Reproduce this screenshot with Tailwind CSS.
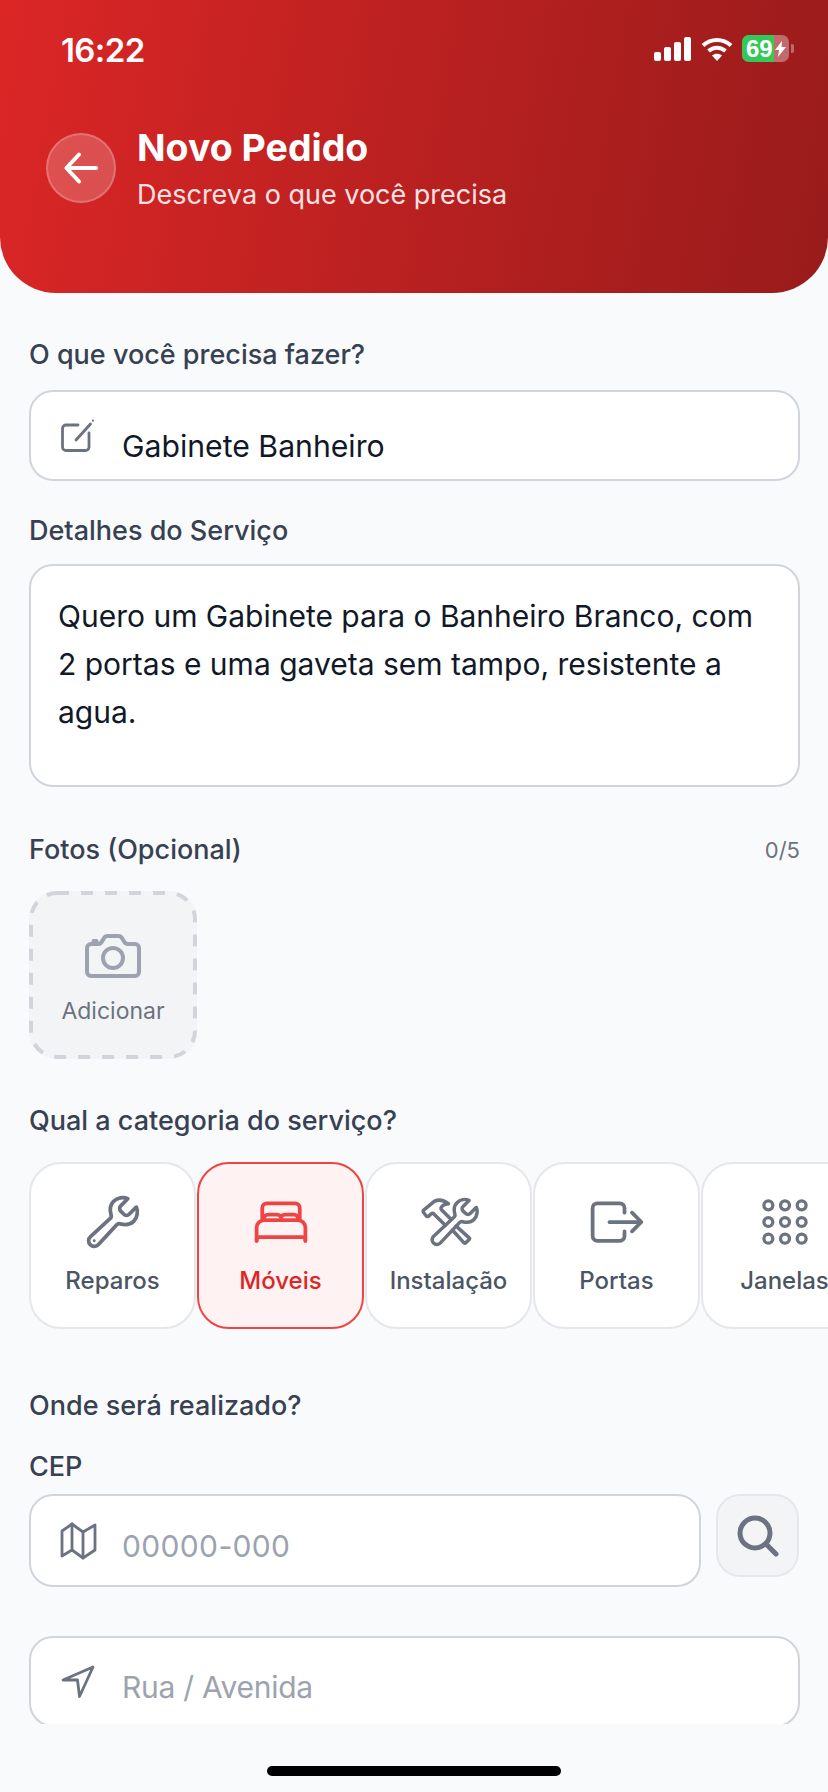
<!DOCTYPE html>
<html lang="pt-BR">
<head>
<meta charset="utf-8">
<script src="https://cdn.jsdelivr.net/npm/@tailwindcss/browser@4"></script>
</head>
<body class="m-0">
<div class="w-[828px] h-[1792px] overflow-hidden bg-[#f9fafb] flex flex-col font-['Inter',sans-serif]">
  <header class="h-[293px] shrink-0 rounded-b-[56px] bg-linear-100 from-[#dc2626] to-[#991b1b] text-white flex flex-col">
    <div class="h-[133px] shrink-0 flex items-start justify-between pl-[61px] pr-[34px] pt-[30px]">
      <span class="text-[33px] leading-[40px] font-semibold tracking-[-0.6px]">16:22</span>
      <div class="flex items-center gap-[9px] mt-[5px]">
        <svg width="38" height="24" viewBox="0 0 38 24" fill="#fff"><rect x="0" y="15" width="7" height="9" rx="2"/><rect x="10" y="10" width="7" height="14" rx="2"/><rect x="20" y="5" width="7" height="19" rx="2"/><rect x="30" y="0" width="7" height="24" rx="2"/></svg>
        <svg width="32" height="25" viewBox="0 0 32 25" fill="none" stroke="#fff" stroke-width="4"><path d="M2 9.500C10 2 22 2 30 9.500"/><path d="M7.500 15C12.500 10.500 19.500 10.500 24.500 15"/><path d="M16 25l-5-5.500c3-2.500 7-2.500 10 0z" fill="#fff" stroke="none"/></svg>
        <div class="flex items-center gap-[2px]">
          <div class="relative w-[47px] h-[27px] rounded-[7px] overflow-hidden bg-white/35 flex">
            <div class="w-[32px] h-full bg-[#34c759]"></div>
            <div class="absolute inset-0 flex items-center pl-[4px] gap-[2px]">
              <span class="font-['Liberation_Sans',sans-serif] text-[24px] leading-[27px] font-bold">69</span>
              <svg width="11" height="16" viewBox="0 0 11 16" fill="#fff"><path d="M7 0L0 9h4L3 16l8-10H6.500z"/></svg>
            </div>
          </div>
          <div class="w-[3px] h-[9px] rounded-r-[2px] bg-white/35"></div>
        </div>
      </div>
    </div>
    <div class="flex items-start pl-[46px] gap-[21px]">
      <div class="w-[70px] h-[70px] shrink-0 rounded-full bg-white/20 border-2 border-white/20 flex items-center justify-center">
        <svg width="34" height="32" viewBox="0 0 34 32" fill="none" stroke="#fff" stroke-width="4" stroke-linecap="round" stroke-linejoin="round"><path d="M15 2.500L2.500 16l12.500 13.500"/><path d="M3 16h29"/></svg>
      </div>
      <div class="flex flex-col -mt-[7px]">
        <h1 class="text-[37.5px] leading-[44px] font-bold">Novo Pedido</h1>
        <p class="text-[27px] leading-[36px] text-[#fee2e2] mt-[7px]">Descreva o que você precisa</p>
      </div>
    </div>
  </header>

  <main class="h-[1431px] shrink-0 overflow-hidden pl-[29px] pr-[28px] pt-[44px] flex flex-col">
    <label class="h-[36px] shrink-0 leading-[36px] text-[27px] font-medium text-[#374151]">O que você precisa fazer?</label>
    <div class="mt-[17px] h-[91px] shrink-0 rounded-[24px] border-2 border-[#d1d5db] bg-white flex items-center pl-[29px]">
      <svg width="36" height="36" viewBox="10 7 36 36" fill="none" stroke="#6b7280" stroke-width="2.800" stroke-linecap="round" stroke-linejoin="round"><path d="M28 14H16a3.500 3.500 0 0 0-3.500 3.500V36a3.500 3.500 0 0 0 3.500 3.500H35.500a3.500 3.500 0 0 0 3.500-3.500V22"/><path d="M26 29L40.500 13"/><path d="M43 9.500v.1" stroke-width="2.200"/></svg>
      <span class="ml-[26px] pt-[20px] text-[30.200px] leading-[40px] text-[#111827]">Gabinete Banheiro</span>
    </div>

    <label class="mt-[32px] h-[36px] shrink-0 leading-[36px] text-[27px] font-medium text-[#374151]">Detalhes do Serviço</label>
    <div class="mt-[15px] h-[223px] shrink-0 rounded-[24px] border-2 border-[#d1d5db] bg-white pl-[27px] pr-[29px] pt-[26px] text-[30px] leading-[48px] text-[#111827]">Quero um Gabinete para o Banheiro Branco, com 2 portas e uma gaveta sem tampo, resistente a agua.</div>

    <div class="mt-[45px] h-[36px] shrink-0 flex items-center justify-between">
      <label class="text-[27px] leading-[36px] font-medium text-[#374151]">Fotos (Opcional)</label>
      <span class="text-[22px] text-[#6b7280]">0/5</span>
    </div>
    <div class="relative mt-[23px] w-[168px] h-[168px] shrink-0 rounded-[28px] bg-[#f3f4f6] flex flex-col items-center pt-[33px]">
      <svg class="absolute inset-0" width="168" height="168" viewBox="0 0 168 168" fill="none" stroke="#d1d5db" stroke-width="4" stroke-dasharray="12 12"><rect x="2" y="2" width="164" height="164" rx="26"/></svg>
      <svg width="64" height="64" viewBox="0 0 512 512" fill="none" stroke="#9ca3af" stroke-width="32" stroke-linecap="round" stroke-linejoin="round"><path d="M350.540 148.680l-26.620-42.060C318.310 100.080 310.620 96 302 96h-92c-8.620 0-16.310 4.080-21.920 10.620l-26.620 42.060C155.850 155.230 148.620 160 140 160H80a32 32 0 00-32 32v192a32 32 0 0032 32h352a32 32 0 0032-32V192a32 32 0 00-32-32h-59c-8.650 0-16.850-4.770-22.460-11.320z"/><circle cx="256" cy="272" r="80"/><path d="M124 158v-22h-24v22"/></svg>
      <span class="mt-[7px] text-[23px] leading-[32px] text-[#6b7280]">Adicionar</span>
    </div>

    <label class="mt-[44px] h-[36px] shrink-0 leading-[36px] text-[27px] font-medium text-[#374151]">Qual a categoria do serviço?</label>
    <div class="mt-[23px] -mr-[28px] flex gap-[1px] overflow-hidden shrink-0">
      <div class="w-[167px] h-[167px] shrink-0 rounded-[32px] border-2 border-[#e5e7eb] bg-white flex flex-col items-center pt-[28px]">
        <svg width="60" height="60" viewBox="0 0 512 512" fill="none" stroke="#6b7280" stroke-width="32" stroke-linecap="round" stroke-linejoin="round"><path d="M393.870 190a32.100 32.100 0 01-45.250 0l-26.570-26.570a32.090 32.090 0 010-45.260L382.190 58a1 1 0 00-.3-1.640c-38.820-16.640-89.150-8.160-121.110 23.570-30.580 30.350-32.320 76-21.120 115.840a31.930 31.930 0 01-9.060 32.080L64 380a48.170 48.170 0 1068 68l153.860-167a31.930 31.930 0 0131.600-9.130c39.540 10.590 84.540 8.600 114.720-21.190 32.490-32 39.500-88.560 23.750-120.930a1 1 0 00-1.600-.26z"/><circle cx="96" cy="416" r="12" fill="#6b7280" stroke="none"/></svg>
        <span class="mt-[11px] text-[24px] leading-[36px] font-medium text-[#4b5563]">Reparos</span>
      </div>
      <div class="w-[167px] h-[167px] shrink-0 rounded-[32px] border-2 border-[#ef4444] bg-[#fef2f2] flex flex-col items-center pt-[28px]">
        <svg width="60" height="60" viewBox="0 0 512 512" fill="none" stroke="#ef4444" stroke-width="32" stroke-linecap="round" stroke-linejoin="round"><path d="M384 240H96V136a40.120 40.120 0 0140-40h240a40.120 40.120 0 0140 40v104zM48 416V304a64.190 64.190 0 0164-64h288a64.190 64.190 0 0164 64v112"/><path d="M48 416v-8a24.070 24.070 0 0124-24h368a24.070 24.070 0 0124 24v8"/><path d="M112 240v-16a32.090 32.090 0 0132-32h80a32.090 32.090 0 0132 32v16M256 240v-16a32.090 32.090 0 0132-32h80a32.090 32.090 0 0132 32v16"/></svg>
        <span class="mt-[11px] text-[24px] leading-[36px] font-medium text-[#dc2626]">Móveis</span>
      </div>
      <div class="w-[167px] h-[167px] shrink-0 rounded-[32px] border-2 border-[#e5e7eb] bg-white flex flex-col items-center pt-[28px]">
        <svg width="60" height="60" viewBox="0 0 512 512" fill="none" stroke="#6b7280" stroke-width="30" stroke-linecap="round" stroke-linejoin="round"><path d="M436.670 184.110a27.170 27.170 0 01-38.300 0l-22.480-22.490a27.150 27.150 0 010-38.290l50.890-50.890a.85.85 0 00-.26-1.380C393.680 57 351.090 64.150 324.050 91c-25.880 25.690-27.350 64.270-17.870 98a27 27 0 01-7.670 27.140l-173 160.760a40.760 40.760 0 1057.570 57.540l162.150-173.300a27 27 0 0126.770-7.700c33.460 8.940 71.490 7.260 97.070-17.940 27.490-27.080 33.420-74.940 20.100-102.330a.85.85 0 00-1.360-.22z"/><path d="M250 100C215 72 170 60 130 80L40 155a14 14 0 0 0-1 20L62 205a14 14 0 0 0 20 1L105 185a14 14 0 0 1 20 0L224 284"/><path d="M275 235L190 150C180 130 210 100 250 100"/><path d="M317 291l111 100a10 10 0 0 1 0 14l-29 29a10 10 0 0 1-15 0L285 324"/></svg>
        <span class="mt-[11px] text-[24px] leading-[36px] font-medium text-[#4b5563]">Instalação</span>
      </div>
      <div class="w-[167px] h-[167px] shrink-0 rounded-[32px] border-2 border-[#e5e7eb] bg-white flex flex-col items-center pt-[28px]">
        <svg width="60" height="60" viewBox="0 0 512 512" fill="none" stroke="#6b7280" stroke-width="32" stroke-linecap="round" stroke-linejoin="round"><path d="M320 176v-40a40 40 0 00-40-40H88a40 40 0 00-40 40v240a40 40 0 0040 40h192a40 40 0 0040-40v-40M384 176l80 80-80 80M191 256h273"/></svg>
        <span class="mt-[11px] text-[24px] leading-[36px] font-medium text-[#4b5563]">Portas</span>
      </div>
      <div class="w-[167px] h-[167px] shrink-0 rounded-[32px] border-2 border-[#e5e7eb] bg-white flex flex-col items-center pt-[28px]">
        <svg width="60" height="60" viewBox="0 0 512 512" fill="none" stroke="#6b7280" stroke-width="28"><circle cx="114" cy="114" r="38"/><circle cx="256" cy="114" r="38"/><circle cx="398" cy="114" r="38"/><circle cx="114" cy="256" r="38"/><circle cx="256" cy="256" r="38"/><circle cx="398" cy="256" r="38"/><circle cx="114" cy="398" r="38"/><circle cx="256" cy="398" r="38"/><circle cx="398" cy="398" r="38"/></svg>
        <span class="mt-[11px] text-[24px] leading-[36px] font-medium text-[#4b5563]">Janelas</span>
      </div>
    </div>

    <label class="mt-[59px] h-[36px] shrink-0 leading-[36px] text-[27px] font-medium text-[#374151]">Onde será realizado?</label>
    <label class="mt-[25px] h-[36px] shrink-0 leading-[36px] text-[27px] font-medium text-[#374151]">CEP</label>
    <div class="mt-[9px] flex items-start gap-[15px] shrink-0">
      <div class="w-[672px] h-[93px] rounded-[24px] border-2 border-[#d1d5db] bg-white flex items-center pl-[29px]">
        <svg width="37" height="38" viewBox="10 11 37 38" fill="none" stroke="#6b7280" stroke-width="2.800" stroke-linecap="round" stroke-linejoin="round"><path d="M12 20L22 13 33 21 45 14V39L33 47 22 39 12 45z"/><path d="M22 13V39M33 21V47"/></svg>
        <span class="ml-[25px] pt-[10px] text-[30px] leading-[40px] tracking-[0.35px] text-[#9ca3af]">00000-000</span>
      </div>
      <div class="w-[83px] h-[83px] rounded-[24px] border-2 border-[#e5e7eb] bg-[#f3f4f6] flex items-center justify-center">
        <svg width="42" height="42" viewBox="0 0 42 42" fill="none" stroke="#6b7280" stroke-width="5" stroke-linecap="round"><circle cx="18" cy="18" r="15"/><path d="M29 29l10 10"/></svg>
      </div>
    </div>
    <div class="mt-[49px] h-[91px] shrink-0 rounded-[24px] border-2 border-[#d1d5db] bg-white flex items-center pl-[29px]">
      <svg width="36" height="36" viewBox="10 9 36 36" fill="none" stroke="#6b7280" stroke-width="2.800" stroke-linecap="round" stroke-linejoin="round"><path d="M43 12L13 25H27.500L29.500 41.500z"/></svg>
      <span class="ml-[26px] pt-[10px] text-[30px] leading-[40px] tracking-[-0.25px] text-[#9ca3af]">Rua / Avenida</span>
    </div>
  </main>

  <div class="flex-1 flex justify-center pt-[42px]">
    <div class="w-[294px] h-[10px] rounded-full bg-black"></div>
  </div>
</div>
</body>
</html>
